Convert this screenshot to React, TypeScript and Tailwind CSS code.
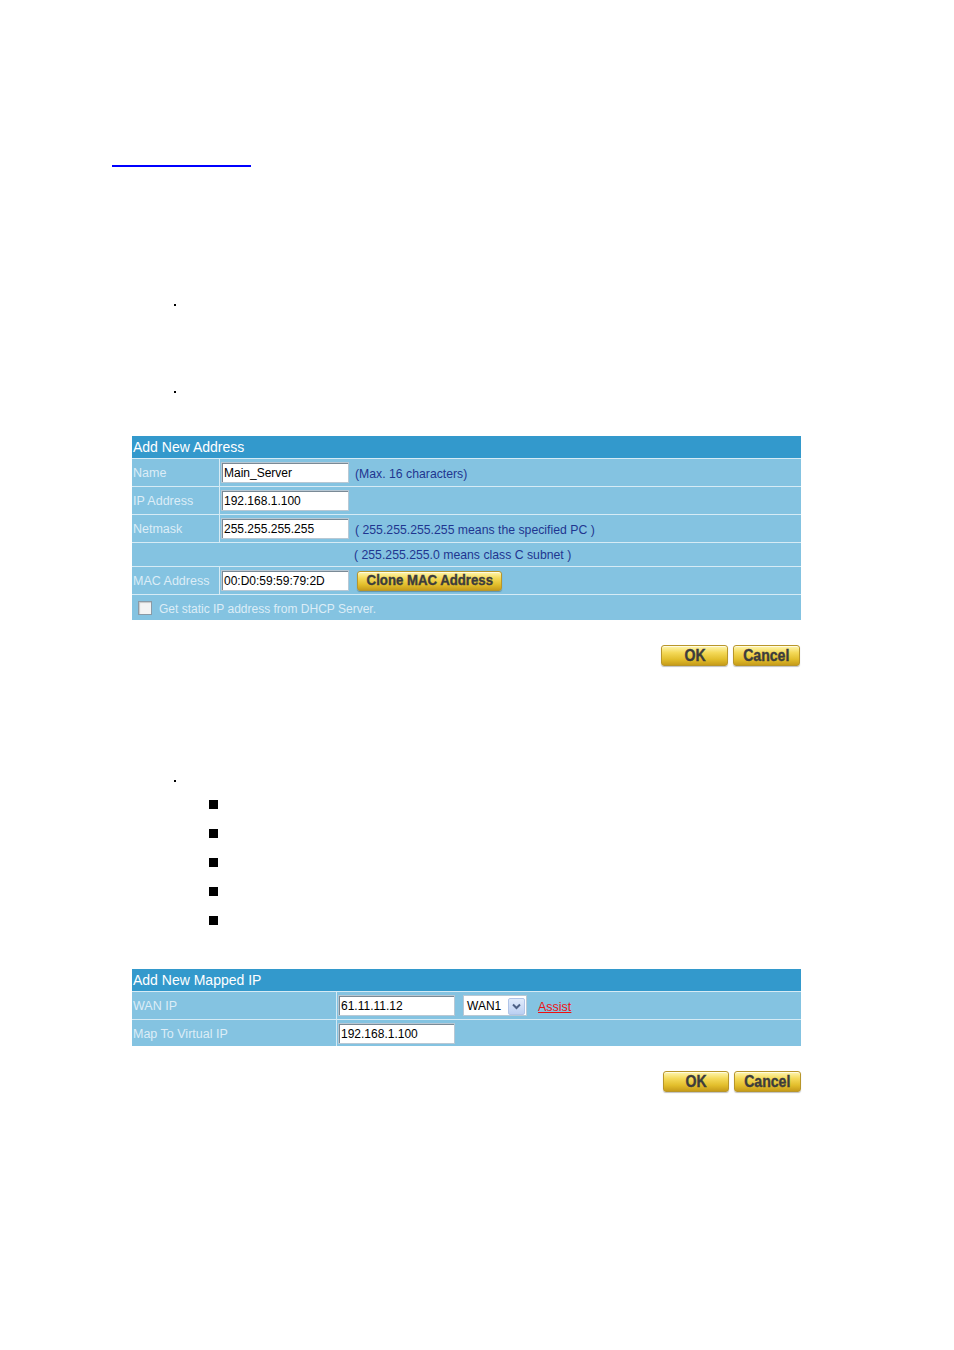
import React from 'react'

const font = "font-['Liberation_Sans',Arial,sans-serif]"

function GoldButton({ label, className = '' }: { label: string; className?: string }) {
  return (
    <button
      className={`flex items-center justify-center rounded-[3px] border border-[#b8962a] bg-[linear-gradient(to_bottom,#fff6b0_0%,#f4d958_35%,#e2be2c_70%,#c79c1a_100%)] shadow-[inset_0_1px_0_#fffbe0,0_1px_1px_rgba(0,0,0,0.25)] font-['Liberation_Sans',Arial,sans-serif] font-bold text-[#3c3c3c] ${className}`}
    >
      <span className="inline-block scale-x-[0.88] whitespace-nowrap [-webkit-text-stroke:0.4px_#3c3c3c]">{label}</span>
    </button>
  )
}

function TextBox({ value, w }: { value: string; w: string }) {
  return (
    <div
      className={`${w} h-[21px] bg-white border border-[#b8c8d4] shadow-[inset_1px_1px_0_#7a8a96] flex items-center pl-[2px] pt-[1px] text-[12px] text-black ${font}`}
    >
      {value}
    </div>
  )
}

function Row1({
  label,
  children,
  help,
}: {
  label: string
  children: React.ReactNode
  help?: React.ReactNode
}) {
  return (
    <div className="flex h-[28px] border-t border-[#d6ebf5]">
      <div className="w-[88px] flex items-center pl-[1px] pt-[2px] text-[12.5px] text-[#dcedf7] border-r border-[#d6ebf5]">
        {label}
      </div>
      <div className="flex items-center pl-[1px]">{children}</div>
      <div className="flex items-center pl-[6px] pt-[3px] text-[12.25px] text-[#1f3690]">{help}</div>
    </div>
  )
}

function Dot({ top }: { top: string }) {
  return <div className={`${top} ml-[174px] w-[2px] h-[2px] bg-black`} />
}

export default function App() {
  return (
    <div className={`w-[954px] h-[1350px] bg-white flex flex-col ${font}`}>
      <div className="mt-[165px] ml-[112px] w-[139px] h-[2px] bg-[#0000ff]" />

      <Dot top="mt-[137px]" />
      <Dot top="mt-[85px]" />

      {/* Add New Address */}
      <div className="mt-[43px] ml-[132px] w-[669px] bg-[#84c3e1]">
        <div className="h-[22px] bg-[#3399cc] text-white text-[14px] flex items-center pl-[1px] pt-[1px]">
          Add New Address
        </div>
        <Row1 label="Name" help="(Max. 16 characters)">
          <TextBox value="Main_Server" w="w-[128px]" />
        </Row1>
        <Row1 label="IP Address">
          <TextBox value="192.168.1.100" w="w-[128px]" />
        </Row1>
        <Row1 label="Netmask" help="( 255.255.255.255 means the specified PC )">
          <TextBox value="255.255.255.255" w="w-[128px]" />
        </Row1>
        <div className="h-[24px] border-t border-[#d6ebf5] flex items-center pl-[222px] pt-[1px] text-[12.25px] text-[#1f3690]">
          ( 255.255.255.0 means class C subnet )
        </div>
        <Row1 label="MAC Address">
          <div className="flex items-center gap-[8px]">
            <TextBox value="00:D0:59:59:79:2D" w="w-[128px]" />
            <GoldButton label="Clone MAC Address" className="w-[145px] h-[20px] text-[15px]" />
          </div>
        </Row1>
        <div className="h-[26px] border-t border-[#d6ebf5] flex items-center pl-[6px] gap-[7px] text-[12px] text-[#dcedf7]">
          <div className="w-[14px] h-[14px] bg-[#f4f4f4] border border-[#8a9aa6] shadow-[inset_1px_1px_1px_#c8c8c8]" />
          <span className="pt-[2px]">Get static IP address from DHCP Server.</span>
        </div>
      </div>

      <div className="mt-[25px] ml-[661px] flex gap-[5px]">
        <GoldButton label="OK" className="w-[67px] h-[21px] text-[16px]" />
        <GoldButton label="Cancel" className="w-[67px] h-[21px] text-[16px]" />
      </div>

      <Dot top="mt-[114px]" />

      <div className="mt-[18px] ml-[209px] flex flex-col gap-[20px]">
        {[0, 1, 2, 3, 4].map((i) => (
          <div key={i} className="w-[9px] h-[9px] bg-black" />
        ))}
      </div>

      {/* Add New Mapped IP */}
      <div className="mt-[44px] ml-[132px] w-[669px] bg-[#84c3e1]">
        <div className="h-[22px] bg-[#3399cc] text-white text-[14px] flex items-center pl-[1px] pt-[1px]">
          Add New Mapped IP
        </div>
        <div className="flex h-[28px] border-t border-[#d6ebf5]">
          <div className="w-[205px] flex items-center pl-[1px] pt-[2px] text-[12.5px] text-[#dcedf7] border-r border-[#d6ebf5]">
            WAN IP
          </div>
          <div className="flex items-center pl-[1px]">
            <TextBox value="61.11.11.12" w="w-[117px]" />
            <div className="ml-[8px] w-[64px] h-[21px] bg-white border border-[#b8c8d4] flex items-center justify-between pl-[3px] pr-[1px] pt-[1px] text-[12px] text-black">
              <span>WAN1</span>
              <div className="w-[17px] h-[17px] rounded-[2px] bg-[linear-gradient(to_bottom,#e0ebfb,#bcd0f2)] border border-[#b0c4e8] flex items-center justify-center">
                <svg width="9" height="7" viewBox="0 0 9 7">
                  <path d="M1 1.5 L4.5 5 L8 1.5" fill="none" stroke="#4d6185" strokeWidth="2" />
                </svg>
              </div>
            </div>
            <a className="ml-[11px] pt-[3px] text-[12.5px] text-[#ee1111] underline">Assist</a>
          </div>
        </div>
        <div className="flex h-[27px] border-t border-[#d6ebf5]">
          <div className="w-[205px] flex items-center pl-[1px] pt-[2px] text-[12.5px] text-[#dcedf7] border-r border-[#d6ebf5]">
            Map To Virtual IP
          </div>
          <div className="flex items-center pl-[1px]">
            <TextBox value="192.168.1.100" w="w-[117px]" />
          </div>
        </div>
      </div>

      <div className="mt-[25px] ml-[663px] flex gap-[5px]">
        <GoldButton label="OK" className="w-[66px] h-[21px] text-[16px]" />
        <GoldButton label="Cancel" className="w-[67px] h-[21px] text-[16px]" />
      </div>
    </div>
  )
}
